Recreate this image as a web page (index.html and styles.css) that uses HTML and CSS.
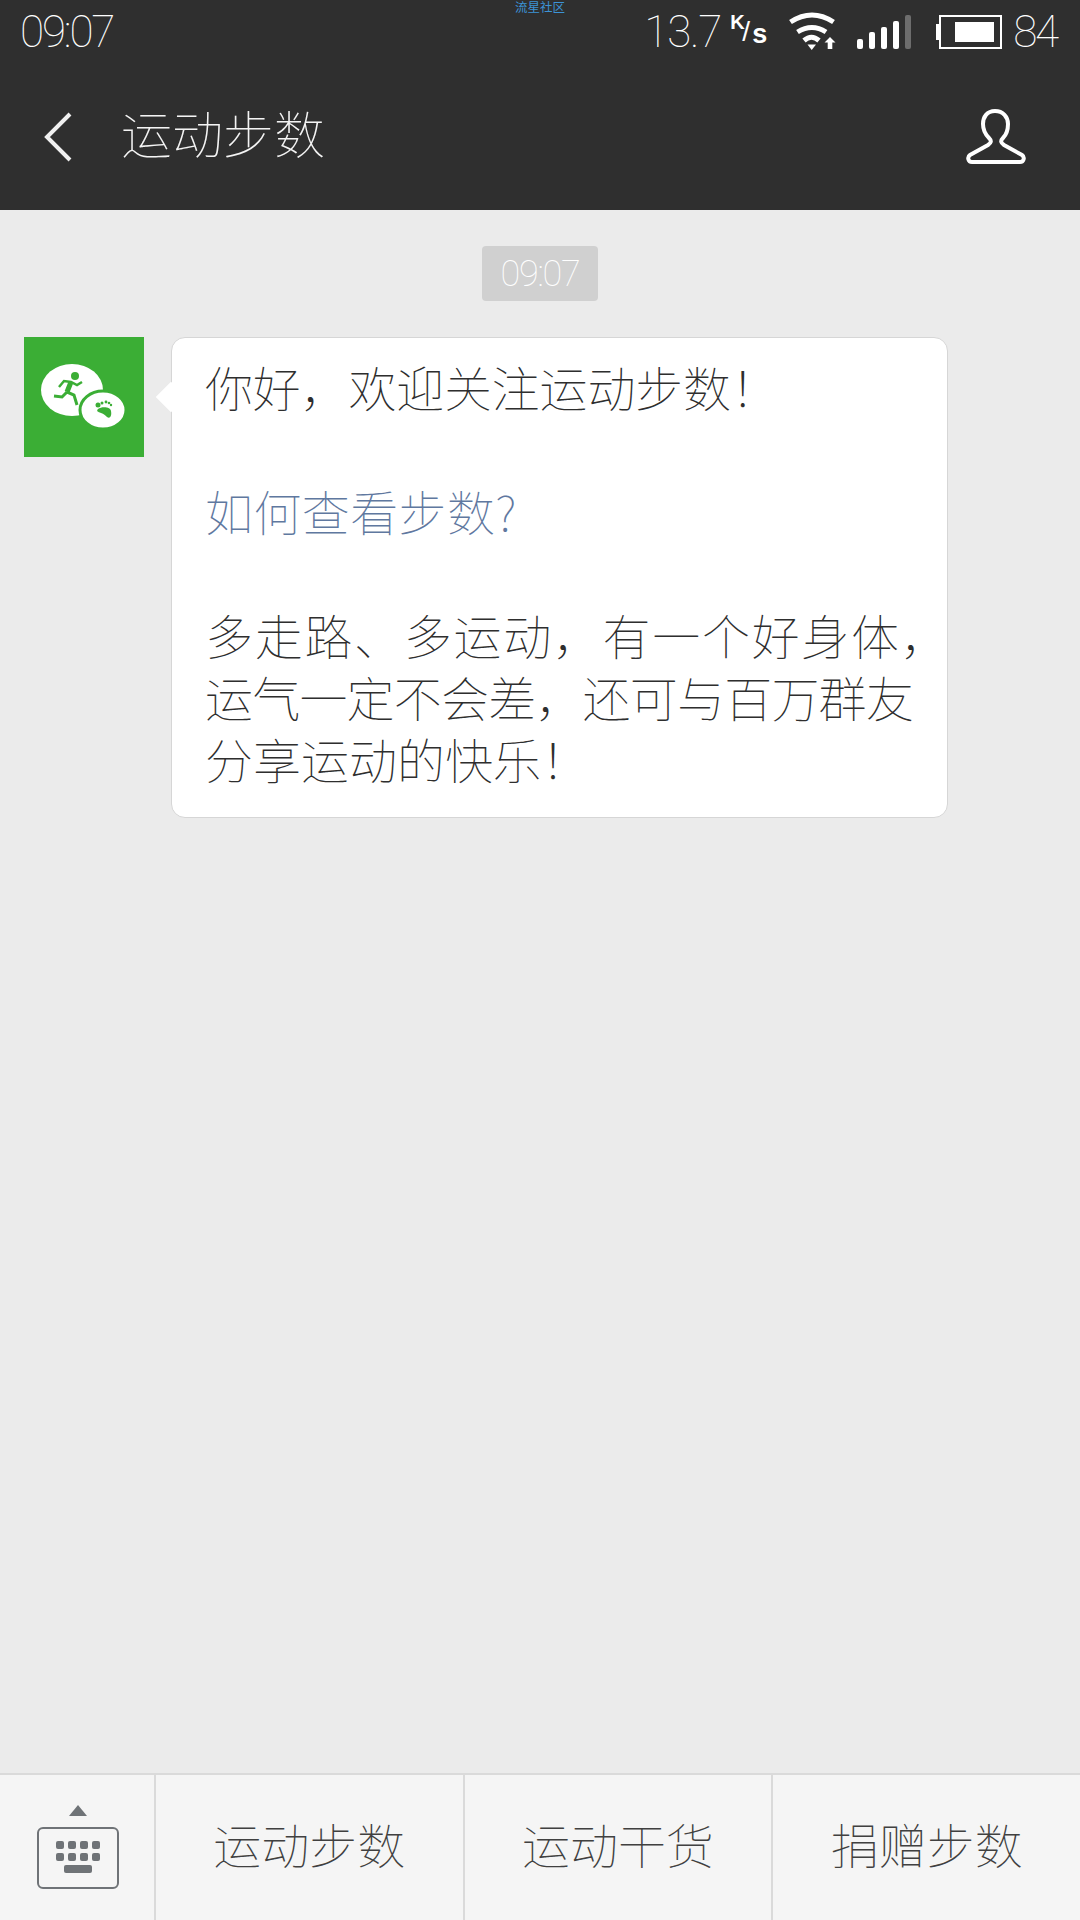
FILE: index.html
```html
<!DOCTYPE html>
<html>
<head>
    <meta charset="utf-8">
    <link rel="stylesheet" href="styles.css">
</head>
<body>
    <div class="phone">
        <div class="top-area">
            <div class="status-bar">
                <span class="clock">09:07</span>
                <span class="watermark">流星社区</span>
                <div class="status-right">
                    <span class="speed">13.7</span>
                    <span class="speed-unit"><span class="unit-k">K</span><span class="unit-slash">/</span><span class="unit-s">s</span></span>
                    <svg class="wifi-icon" width="48" height="40" viewBox="0 0 48 40">
                        <path d="M1.500 10 Q23 -4 44.500 10" fill="none" stroke="#fff" stroke-width="5"/>
                        <path d="M8.500 20 Q23 11 37 20" fill="none" stroke="#fff" stroke-width="5"/>
                        <path d="M15 28.500 Q22.500 22 30 28.500" fill="none" stroke="#fff" stroke-width="5"/>
                        <path d="M18.500 32.500 L27 32.500 L22.700 38 Z" fill="#fff"/>
                        <path d="M41 25 L46.500 30.500 L43.300 30.500 L43.300 37 L38.700 37 L38.700 30.500 L35.500 30.500 Z" fill="#fff"/>
                    </svg>
                    <div class="signal">
                        <span class="bar bar-1"></span>
                        <span class="bar bar-2"></span>
                        <span class="bar bar-3"></span>
                        <span class="bar bar-4"></span>
                        <span class="bar bar-5"></span>
                    </div>
                    <div class="battery">
                        <span class="battery-tip"></span>
                        <div class="battery-body"><span class="battery-fill"></span></div>
                    </div>
                    <span class="battery-num">84</span>
                </div>
            </div>
            <div class="title-bar">
                <svg class="back-icon" width="32" height="52" viewBox="0 0 32 52">
                    <path d="M28 3 L5 26 L28 49" fill="none" stroke="#f0f0f0" stroke-width="4"/>
                </svg>
                <span class="title">运动步数</span>
                <svg class="user-icon" width="60" height="56" viewBox="0 0 60 56">
                    <path d="M29 2 C21 2 17 8 17 15 C17 22 20 26 23 29 C26 32 25 34 22 36 L4 46 C1 48 2 53 6 53 L54 53 C58 53 59 48 56 46 L38 36 C35 34 34 32 37 29 C40 26 42 22 42 15 C42 8 37 2 29 2 Z" fill="none" stroke="#fff" stroke-width="4"/>
                </svg>
            </div>
        </div>

        <div class="chat">
            <div class="time-row"><span class="time-label">09:07</span></div>
            <div class="message">
                <div class="avatar">
                    <svg width="120" height="120" viewBox="0 0 120 120">
                        <ellipse cx="48" cy="53" rx="31" ry="26" fill="#fff"/>
                        <ellipse cx="79" cy="73" rx="23" ry="19" fill="#fff" stroke="#3bae35" stroke-width="3"/>
                        <circle cx="51" cy="39" r="4" fill="#3bae35"/>
                        <path d="M47 45 L43 55" fill="none" stroke="#3bae35" stroke-width="5"/>
                        <path d="M35 50 L40 44 L47 45 L53 48 L58 45" fill="none" stroke="#3bae35" stroke-width="2.500"/>
                        <path d="M43 55 L38 60 L30 59" fill="none" stroke="#3bae35" stroke-width="3"/>
                        <path d="M43 55 L50 58 L53 68" fill="none" stroke="#3bae35" stroke-width="3"/>
                        <path d="M74 72 C78 69 87 70 87 74 C88 79 86 82 83 80 C81 78 80 77 77 76 C74 75 72 74 74 72 Z" fill="#3bae35"/>
                        <circle cx="74" cy="68" r="2.500" fill="#3bae35"/>
                        <circle cx="78" cy="66" r="1.500" fill="#3bae35"/>
                        <circle cx="82" cy="65" r="1.400" fill="#3bae35"/>
                        <circle cx="85" cy="66" r="1.300" fill="#3bae35"/>
                        <circle cx="87" cy="68" r="1.200" fill="#3bae35"/>
                    </svg>
                </div>
                <div class="bubble">
                    <p class="line-first">你好，欢迎关注运动步数！</p>
                    <p class="gap"><a class="link">如何查看步数?</a></p>
                    <p class="gap line-wide">多走路、多运动，有一个好身体，</p>
                    <p class="line-tight">运气一定不会差，还可与百万群友</p>
                    <p>分享运动的快乐！</p>
                </div>
            </div>
        </div>

        <div class="menu-bar">
            <div class="menu-keyboard">
                <span class="kb-arrow"></span>
                <div class="kb-box">
                    <div class="kb-keys">
                        <span></span><span></span><span></span><span></span>
                        <span></span><span></span><span></span><span></span>
                    </div>
                    <span class="kb-space"></span>
                </div>
            </div>
            <div class="menu-item">运动步数</div>
            <div class="menu-item">运动干货</div>
            <div class="menu-item">捐赠步数</div>
        </div>
    </div>
</body>
</html>
```

FILE: styles.css
```css
* {
    box-sizing: border-box;
}

body {
    margin: 0;
    font-family: "Noto Sans CJK SC", "Noto Sans", sans-serif;
    font-weight: 100;
    background-color: #ebebeb;
}

.phone {
    width: 1080px;
    height: 1920px;
    display: flex;
    flex-direction: column;
    overflow: hidden;
}

.top-area {
    height: 210px;
    background-color: #2f2f2f;
    color: white;
}

.status-bar {
    height: 64px;
    padding: 0 23px 0 20px;
    display: flex;
    align-items: center;
    justify-content: space-between;
    position: relative;
}

.clock,
.speed,
.battery-num {
    font-family: Roboto, "Open Sans", sans-serif;
    font-weight: 100;
    font-size: 44px;
    letter-spacing: -2.200px;
}

.speed {
    letter-spacing: -1.200px;
}

.watermark {
    position: absolute;
    top: 0;
    left: 515px;
    font-size: 12.500px;
    line-height: 13px;
    font-weight: 400;
    color: #3c93d6;
}

.status-right {
    display: flex;
    align-items: center;
}

.speed-unit {
    margin-left: 9px;
    width: 38px;
    height: 36px;
    font-family: "Liberation Sans", sans-serif;
    font-weight: 700;
    position: relative;
    margin-right: 21px;
}

.unit-k,
.unit-slash,
.unit-s {
    position: absolute;
}

.unit-k {
    left: 0;
    top: -3px;
    font-size: 20px;
}

.unit-slash {
    left: 12px;
    top: 2px;
    font-size: 28px;
    font-weight: 400;
}

.unit-s {
    left: 22px;
    top: 5px;
    font-size: 27px;
}

.wifi-icon {
    margin-right: 20px;
}

.signal {
    display: flex;
    align-items: flex-end;
    gap: 6px;
    height: 34px;
    margin-right: 25px;
}

.bar {
    width: 6px;
    border-radius: 2px;
    background-color: white;
}

.bar-1 { height: 10px; }
.bar-2 { height: 17px; }
.bar-3 { height: 22px; }
.bar-4 { height: 28px; }
.bar-5 { height: 34px; background-color: #6d6d6d; }

.battery {
    display: flex;
    align-items: center;
    margin-right: 11px;
}

.battery-tip {
    width: 3px;
    height: 16px;
    background-color: white;
}

.battery-body {
    width: 63px;
    height: 34px;
    border: 2px solid white;
    padding: 5px 6px 5px 14px;
}

.battery-fill {
    display: block;
    height: 100%;
    background-color: white;
}

.title-bar {
    height: 146px;
    padding: 0 54px 0 42px;
    display: flex;
    align-items: center;
}

.back-icon {
    margin-right: 47px;
}

.title {
    font-size: 51px;
    flex: 1;
    margin-bottom: 10px;
    color: #f4f4f4;
}

.chat {
    flex: 1;
    padding: 36px 24px 0;
}

.time-row {
    display: flex;
    justify-content: center;
}

.time-label {
    width: 116px;
    height: 55px;
    background-color: #d0d0d0;
    color: white;
    border-radius: 4px;
    font-family: Roboto, "Open Sans", sans-serif;
    font-weight: 100;
    font-size: 36px;
    line-height: 56px;
    text-align: center;
    letter-spacing: -1.200px;
}

.message {
    display: flex;
    margin-top: 36px;
}

.avatar {
    width: 120px;
    height: 120px;
    background-color: #3bae35;
    flex-shrink: 0;
}

.avatar svg {
    display: block;
}

.bubble {
    margin-left: 27px;
    width: 777px;
    height: 481px;
    padding: 17px 20px 0 33px;
    background-color: white;
    border: 1px solid #d6d6d6;
    border-radius: 14px;
    position: relative;
    font-size: 48px;
    line-height: 62px;
    color: #2e2e2e;
}

.bubble::before {
    content: "";
    position: absolute;
    left: -16px;
    top: 44px;
    width: 30px;
    height: 30px;
    background-color: white;
    transform: rotate(45deg) scale(0.72);
}

.bubble p {
    margin: 0;
    white-space: nowrap;
}

.bubble .gap {
    margin-top: 62px;
}

.bubble .line-first {
    letter-spacing: -0.2px;
}

.bubble .line-wide {
    letter-spacing: 1.700px;
}

.bubble .line-tight {
    letter-spacing: -0.800px;
}

.link {
    color: #5f78a0;
    letter-spacing: 0.400px;
}

.menu-bar {
    height: 147px;
    display: flex;
    background-color: #f5f5f5;
    border-top: 2px solid #dadada;
}

.menu-keyboard {
    width: 154px;
    display: flex;
    flex-direction: column;
    align-items: center;
    padding: 30px 0 0 2px;
}

.kb-arrow {
    width: 0;
    height: 0;
    border-left: 9px solid transparent;
    border-right: 9px solid transparent;
    border-bottom: 11px solid #6f7377;
}

.kb-box {
    width: 82px;
    height: 62px;
    margin-top: 11px;
    border: 2px solid #6f7377;
    border-radius: 6px;
    display: flex;
    flex-direction: column;
    align-items: center;
    padding-top: 12px;
}

.kb-keys {
    display: grid;
    grid-template-columns: repeat(4, 8px);
    gap: 4px;
}

.kb-keys span {
    height: 8px;
    border-radius: 2px;
    background-color: #6f7377;
}

.kb-space {
    width: 28px;
    height: 8px;
    margin-top: 4px;
    border-radius: 2px;
    background-color: #6f7377;
}

.menu-item {
    flex: 1;
    display: flex;
    align-items: center;
    justify-content: center;
    padding-bottom: 10px;
    border-left: 2px solid #dadada;
    font-size: 48px;
    color: #404040;
}
```
